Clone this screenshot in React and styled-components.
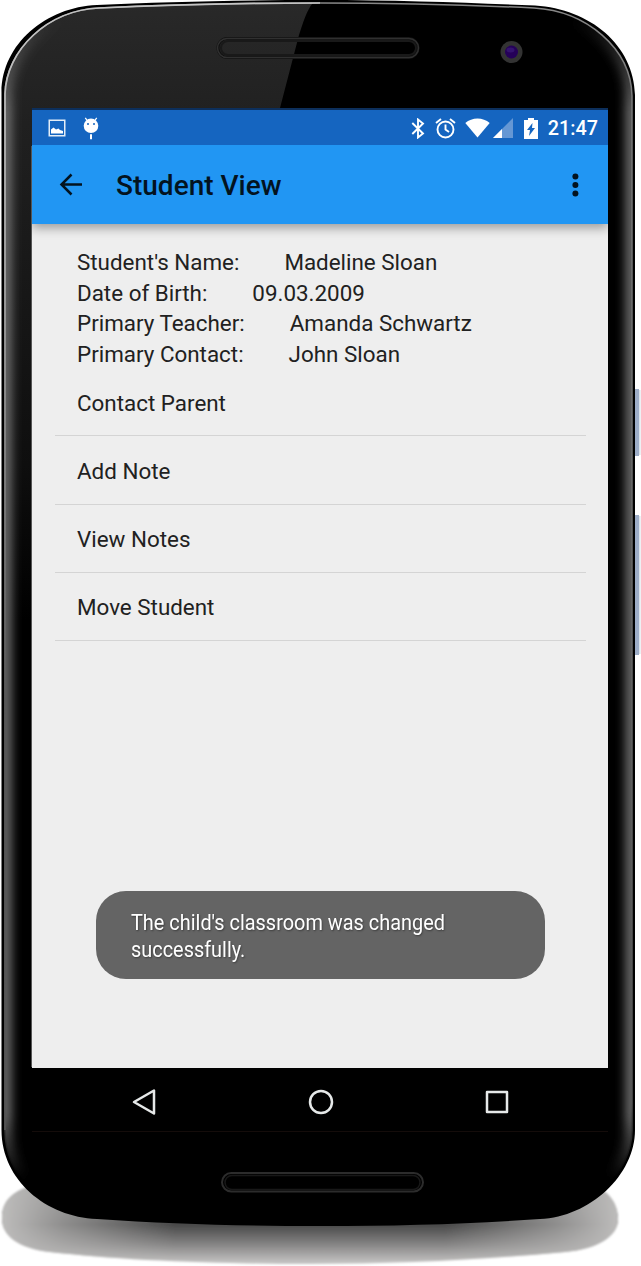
import React from "react";
import styled, { createGlobalStyle } from "styled-components";

const Global = createGlobalStyle`
  * { box-sizing: border-box; }
  html, body { margin: 0; padding: 0; background: #fff; }
  body { font-family: Roboto, "Liberation Sans", sans-serif; overflow: hidden; }
`;

const Device = styled.div`
  position: relative;
  width: 641px;
  height: 1266px;
  padding: 108px 33px 0 32px;
`;

const Shell = styled.svg`
  position: absolute;
  inset: 0;
  display: block;
`;

const Screen = styled.div`
  position: relative;
  width: 576px;
  height: 1024px;
  display: flex;
  flex-direction: column;
  background: #eee;
  color: #212121;
`;

const StatusBar = styled.div`
  height: 37px;
  flex: none;
  display: flex;
  align-items: center;
  justify-content: space-between;
  padding: 1px 10px 0 16px;
  background: #1565c0;
  border-top: 2px solid #0c2f5c;
  color: #fff;
`;

const Tray = styled.div`
  display: flex;
  align-items: center;
`;

const Clock = styled.span`
  margin-left: 10px;
  padding-top: 2px;
  font-size: 19.8px;
  font-weight: 500;
  line-height: 30px;
`;

const Glyph = styled.svg`
  display: block;
  flex: none;
  margin-left: ${(p) => p.$gap || 0}px;
`;

const AppBar = styled.header`
  position: relative;
  height: 79px;
  flex: none;
  display: flex;
  align-items: center;
  padding: 0 20px 0 27px;
  background: #2196f3;
  box-shadow: 0 4px 10px rgba(0, 0, 0, 0.35);
  clip-path: inset(0 0 -18px 0);
`;

const Title = styled.h1`
  flex: 1;
  margin: 2px 0 0 33px;
  font-size: 28px;
  font-weight: 500;
  line-height: 36px;
  color: #03131f;
`;

const Content = styled.main`
  flex: 1;
  padding: 23px 22px 0 23px;
`;

const Details = styled.dl`
  margin: 0;
  padding-left: 22px;
`;

const Field = styled.div`
  display: flex;
  gap: 45px;
  font-size: 22.4px;
  line-height: 30.5px;
  white-space: nowrap;

  dt, dd { margin: 0; }
`;

const Actions = styled.ul`
  list-style: none;
  margin: -0.8px 0 0;
  padding: 0;
`;

const Action = styled.li`
  height: 68.2px;
  padding: 1.5px 22px 0;
  display: flex;
  align-items: center;
  border-bottom: 1px solid #d4d4d4;
  font-size: 22.4px;
`;

const Toast = styled.div`
  position: absolute;
  left: 64px;
  top: 783px;
  width: 449px;
  height: 88px;
  padding: 19px 35px;
  border-radius: 30px;
  background: #646464;
  color: #fff;
`;

const ToastText = styled.p`
  margin: 0;
  width: 420px;
  font-size: 22.8px;
  line-height: 26.5px;
  text-shadow: 1px 1px 2px rgba(0, 0, 0, 0.4);
  transform: scaleX(0.873);
  transform-origin: 0 0;
`;

const NavBar = styled.nav`
  height: 64px;
  flex: none;
  display: flex;
  align-items: center;
  justify-content: space-between;
  padding: 4px 97px 0 98px;
  background: #000;
  border-bottom: 1px solid #140c0a;
`;

const bodyPath =
  "M1.5 92C2 44 46 7 97 5C160 2 235 0 320 0C400 0 470 3 535 5.500C590 9 634 45 635 95V1130C635 1175 590 1217 540 1219C470 1224 400 1226 320 1226C240 1226 170 1224 97 1219C46 1217 1.500 1180 1.500 1130Z";
const rimPath =
  "M5 94C6 50 48 10 99 8C160 5 235 3 320 3C400 3 470 5 534 8C586 11 631 48 632 96V1130C632 1173 588 1215 540 1217C470 1222 400 1224 320 1224C240 1224 170 1222 97 1217C48 1215 5 1178 5 1130Z";
const leftRim = "M5 1130V94C6 50 48 10 99 8C160 5 235 3 320 3";
const shadowPath =
  "M2 1218C2 1200 14 1190 35 1185H590C610 1190 618 1205 618 1219C618 1236 598 1249 565 1252C480 1260 400 1264 310 1264C210 1264 120 1260 50 1252C18 1248 2 1236 2 1218Z";

function Phone() {
  return (
    <Shell width="641" height="1266" viewBox="0 0 641 1266" aria-hidden="true">
      <defs>
        <linearGradient id="ground" x1="0" y1="1185" x2="0" y2="1264" gradientUnits="userSpaceOnUse">
          <stop offset="0" stopColor="#777" />
          <stop offset=".5" stopColor="#484848" />
          <stop offset=".75" stopColor="#858484" />
          <stop offset="1" stopColor="#c8c7c6" />
        </linearGradient>
        <linearGradient id="ends">
          <stop offset="0" stopColor="#bdbcbb" />
          <stop offset=".1" stopColor="#bdbcbb" stopOpacity=".6" />
          <stop offset=".28" stopColor="#bdbcbb" stopOpacity="0" />
          <stop offset=".72" stopColor="#bdbcbb" stopOpacity="0" />
          <stop offset=".9" stopColor="#bdbcbb" stopOpacity=".6" />
          <stop offset="1" stopColor="#bdbcbb" />
        </linearGradient>
        <linearGradient id="rim" x1="0" y1="0" x2="0" y2="1226" gradientUnits="userSpaceOnUse">
          <stop offset="0" stopColor="#888" />
          <stop offset=".1" stopColor="#777" />
          <stop offset=".9" stopColor="#555" />
          <stop offset=".96" stopColor="#000" />
        </linearGradient>
        <linearGradient id="shine" x1="0" y1="0" x2="0" y2="700" gradientUnits="userSpaceOnUse">
          <stop offset="0" stopColor="#c4c4c4" />
          <stop offset=".4" stopColor="#a5a5a5" />
          <stop offset="1" stopColor="#555" />
        </linearGradient>
        <linearGradient id="gloss" x1="0" y1="0" x2="0" y2="620" gradientUnits="userSpaceOnUse">
          <stop offset="0" stopColor="#292929" />
          <stop offset=".2" stopColor="#202020" />
          <stop offset=".75" stopColor="#0e0e0e" />
          <stop offset="1" stopColor="#000" />
        </linearGradient>
        <linearGradient id="fade" x1="0" y1="0" x2="0" y2="1226" gradientUnits="userSpaceOnUse">
          <stop offset=".015" stopColor="#777" stopOpacity="0" />
          <stop offset=".09" stopColor="#777" />
          <stop offset=".91" stopColor="#777" />
          <stop offset=".96" stopColor="#777" stopOpacity="0" />
        </linearGradient>
        <clipPath id="face"><path d={rimPath} /></clipPath>
        <filter id="soft" x="-10%" width="120%"><feGaussianBlur stdDeviation="5.500" /></filter>
        <filter id="edge"><feGaussianBlur stdDeviation="1.300" /></filter>
      </defs>
      <g filter="url(#edge)">
        <path d={shadowPath} fill="url(#ground)" />
        <path d={shadowPath} fill="url(#ends)" />
      </g>
      <path d="M635 389h4v67h-4zM635 515h4v140h-4z" fill="#9dadc7" />
      <path d="M639 390h1.500v65h-1.500zM639 516h1.500v138h-1.500z" fill="#dbe3ea" />
      <path d={bodyPath} fill="#000" />
      <g clipPath="url(#face)">
        <path d="M0 0H316C308 6 304 20 299 35L280 108H32V640H0Z" fill="url(#gloss)" />
        <path d={rimPath} fill="none" stroke="url(#fade)" strokeWidth="12" filter="url(#soft)" />
      </g>
      <path d={rimPath} fill="none" stroke="url(#rim)" strokeWidth="1.500" />
      <path d={leftRim} fill="none" stroke="url(#shine)" strokeWidth="1.700" />
      <path d="M31.500 146V1067" stroke="#555" strokeWidth="1" />
      <g fill="none">
        <rect x="218" y="38.500" width="200" height="19" rx="9.500" stroke="#111" strokeWidth="3" />
        <rect x="217.500" y="38.500" width="201" height="19" rx="9.500" stroke="#303030" strokeWidth="1.500" />
        <rect x="221" y="41" width="195" height="14" rx="7" stroke="#191919" strokeWidth="2" />
        <rect x="222" y="1173" width="201" height="18.500" rx="9.250" stroke="#2c2c2c" strokeWidth="2" />
        <rect x="225" y="1175.500" width="195" height="14" rx="7" stroke="#181818" strokeWidth="1.500" />
      </g>
      <circle cx="511.500" cy="52" r="11" fill="#333" />
      <circle cx="511.500" cy="52" r="6.500" fill="#250059" />
      <ellipse cx="510.500" cy="50" rx="4" ry="2.500" fill="#48298a" opacity=".45" />
    </Shell>
  );
}

const fields = [
  ["Student's Name:", "Madeline Sloan"],
  ["Date of Birth:", "09.03.2009"],
  ["Primary Teacher:", "Amanda Schwartz"],
  ["Primary Contact:", "John Sloan"],
];
const actions = ["Contact Parent", "Add Note", "View Notes", "Move Student"];

export default function App() {
  return (
    <>
      <Global />
      <Device>
        <Phone />
        <Screen>
          <StatusBar>
            <Tray>
              <Glyph width="18" height="18" viewBox="0 0 18 18">
                <rect x="1.250" y="1.250" width="15.500" height="15.500" fill="none" stroke="#e3edf7" strokeWidth="1.500" />
                <path d="M3 14.500V10.500L5.500 8.500L8 10.500L10.500 9.500L12 11L15 12V14.500Z" fill="#fff" />
              </Glyph>
              <Glyph $gap={17} width="16" height="23" viewBox="0 0 16 23" fill="#fff">
                <path d="M2.300 .8L4.500 4M13.700 .8L11.500 4" stroke="#fff" strokeWidth="1.300" />
                <circle cx="8" cy="8.800" r="7.300" />
                <path d="M7 17.200h2v5H7z" />
                <path d="M4 6.200h2v1.500H4zM10 6.200h2v1.500h-2z" fill="#1565c0" />
              </Glyph>
            </Tray>
            <Tray>
              <Glyph width="14" height="21" viewBox="0 0 14 21" fill="none" stroke="#fff" strokeWidth="1.900">
                <path d="M1.300 5L12 15.500L7 19.500V1.500L12 5.500L1.300 16" />
              </Glyph>
              <Glyph $gap={10} width="21" height="21" viewBox="0 0 21 21" fill="none" stroke="#fff" strokeWidth="1.900">
                <circle cx="10.500" cy="11.500" r="8" />
                <path d="M10.500 6.500V11.500L14 14M1 5L6 1M20 5L15 1" />
              </Glyph>
              <Glyph $gap={9} width="25" height="20" viewBox="0 0 25 20" fill="#fff">
                <path d="M.3 5C7-1 18-1 24.700 5L12.500 19.500Z" />
              </Glyph>
              <Glyph $gap={3} width="20" height="20" viewBox="0 0 20 20">
                <path d="M0 20L20 0V20Z" fill="#6597d4" />
                <path d="M0 20L9 11V20Z" fill="#fff" />
              </Glyph>
              <Glyph $gap={11} width="14" height="21" viewBox="0 0 14 21">
                <path d="M0 2H4V0H10V2H14V21H0Z" fill="#fff" />
                <path d="M8.500 5L3 12H6L5 18L11 10H8Z" fill="#1565c0" />
              </Glyph>
              <Clock>21:47</Clock>
            </Tray>
          </StatusBar>
          <AppBar>
            <Glyph width="24" height="23" viewBox="0 0 24 23" fill="none" stroke="#03131f" strokeWidth="2.500">
              <path d="M12.500 1.500L2.500 11.500L12.500 21.500M2.500 11.500H23" />
            </Glyph>
            <Title>Student View</Title>
            <Glyph width="26" height="24" viewBox="0 0 26 24" fill="#03131f">
              <circle cx="13.400" cy="3.500" r="3" />
              <circle cx="13.400" cy="12" r="3" />
              <circle cx="13.400" cy="20.500" r="3" />
            </Glyph>
          </AppBar>
          <Content>
            <Details>
              {fields.map(([label, value]) => (
                <Field key={label}>
                  <dt>{label}</dt>
                  <dd>{value}</dd>
                </Field>
              ))}
            </Details>
            <Actions>
              {actions.map((name) => (
                <Action key={name}>{name}</Action>
              ))}
            </Actions>
          </Content>
          <Toast>
            <ToastText>
              The child's classroom was changed
              <br />
              successfully.
            </ToastText>
          </Toast>
          <NavBar>
            <Glyph width="28" height="28" viewBox="0 0 28 28" fill="none" stroke="#e6e9e9" strokeWidth="2.500" strokeLinejoin="round">
              <path d="M4 14L24 2.500V25.500Z" />
            </Glyph>
            <Glyph width="28" height="28" viewBox="0 0 28 28" fill="none" stroke="#e6e9e9" strokeWidth="2.500">
              <circle cx="14" cy="14" r="11" />
            </Glyph>
            <Glyph width="28" height="28" viewBox="0 0 28 28" fill="none" stroke="#e6e9e9" strokeWidth="2.500" strokeLinejoin="round">
              <path d="M4 4H24V24H4Z" />
            </Glyph>
          </NavBar>
        </Screen>
      </Device>
    </>
  );
}
